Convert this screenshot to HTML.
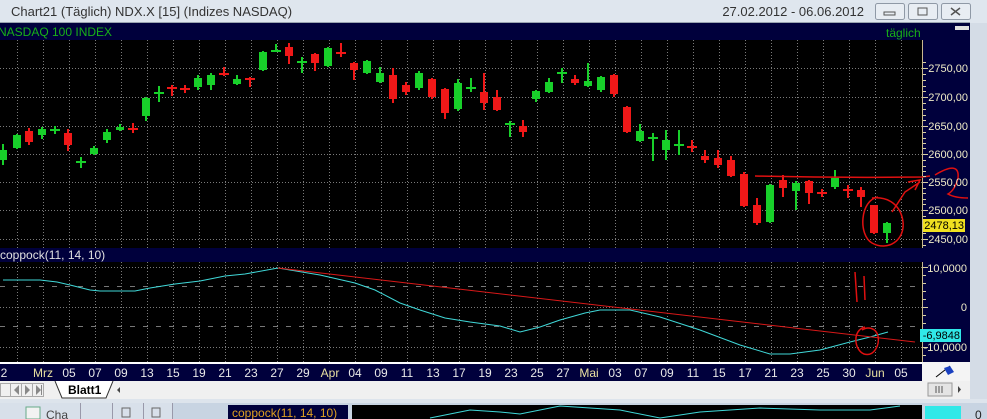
<!DOCTYPE html>
<html><head><meta charset="utf-8"><style>
html,body{margin:0;padding:0;width:987px;height:419px;overflow:hidden;background:#d6dee8;}
svg{display:block}
text{font-family:"Liberation Sans",sans-serif;}
</style></head><body>
<svg width="987" height="419" viewBox="0 0 987 419" xmlns="http://www.w3.org/2000/svg">
<rect x="0" y="0" width="987" height="23" fill="#dfe6ee"/>
<rect x="0" y="22" width="970" height="1" fill="#9aa4b0"/>
<text x="11" y="16" font-size="13" fill="#333">Chart21 (Täglich)  NDX.X [15] (Indizes NASDAQ)</text>
<text x="864" y="16" font-size="13" fill="#333" text-anchor="end">27.02.2012 - 06.06.2012</text>
<g fill="#e8edf3" stroke="#8f99a6">
<rect x="875.5" y="3.5" width="29" height="16" rx="2"/>
<rect x="908.5" y="3.5" width="29" height="16" rx="2"/>
<rect x="941.5" y="3.5" width="29" height="16" rx="2"/>
</g>
<rect x="884" y="12" width="11" height="3" fill="none" stroke="#555"/>
<rect x="918" y="8" width="9" height="7" fill="none" stroke="#555"/>
<path d="M951 8l9 7M960 8l-9 7" stroke="#555" stroke-width="1.5"/>
<rect x="970" y="23" width="17" height="380" fill="#d4dce6"/>
<rect x="0" y="23" width="970" height="17" fill="#00003c"/>
<text x="-2" y="36" font-size="12" fill="#18b018">NASDAQ 100 INDEX</text>
<text x="886" y="37" font-size="12" fill="#18b018">täglich</text>
<rect x="955" y="26" width="14" height="4" fill="#e0e0e0"/>
<rect x="0" y="40" width="922" height="208" fill="#000"/>
<rect x="922" y="40" width="48" height="208" fill="#00003c"/>
<rect x="922" y="40" width="1" height="208" fill="#c8b890"/>
<rect x="0" y="248" width="970" height="14" fill="#00003c"/>
<text x="0" y="259" font-size="12" fill="#e0e0e0">coppock(11, 14, 10)</text>
<rect x="0" y="262" width="922" height="100" fill="#000"/>
<rect x="922" y="262" width="48" height="100" fill="#00003c"/>
<rect x="922" y="262" width="1" height="100" fill="#c8b890"/>
<g stroke="#7a7a7a" stroke-width="1" stroke-dasharray="1,2">
<path d="M17.5 40V248M43.5 40V248M69.5 40V248M95.5 40V248M121.5 40V248M147.5 40V248M173.5 40V248M199.5 40V248M225.5 40V248M251.5 40V248M277.5 40V248M303.5 40V248M329.5 40V248M355.5 40V248M381.5 40V248M407.5 40V248M433.5 40V248M459.5 40V248M485.5 40V248M511.5 40V248M537.5 40V248M563.5 40V248M589.5 40V248M615.5 40V248M641.5 40V248M667.5 40V248M693.5 40V248M719.5 40V248M745.5 40V248M771.5 40V248M797.5 40V248M823.5 40V248M849.5 40V248M875.5 40V248M901.5 40V248"/>
<path d="M0 68.5H922M0 97.5H922M0 126.5H922M0 154.5H922M0 182.5H922M0 210.5H922M0 239.5H922"/>
<path d="M17.5 262V362M43.5 262V362M69.5 262V362M95.5 262V362M121.5 262V362M147.5 262V362M173.5 262V362M199.5 262V362M225.5 262V362M251.5 262V362M277.5 262V362M303.5 262V362M329.5 262V362M355.5 262V362M381.5 262V362M407.5 262V362M433.5 262V362M459.5 262V362M485.5 262V362M511.5 262V362M537.5 262V362M563.5 262V362M589.5 262V362M615.5 262V362M641.5 262V362M667.5 262V362M693.5 262V362M719.5 262V362M745.5 262V362M771.5 262V362M797.5 262V362M823.5 262V362M849.5 262V362M875.5 262V362M901.5 262V362"/>
<path d="M0 267.5H922M0 307.5H922M0 347.5H922"/>
</g>
<g stroke="#777" stroke-dasharray="5,8"><path d="M0 286.5H922M0 326.5H922"/></g>
<g fill="#18d02a" stroke="#18d02a">
<g stroke-width="2" fill="none"><path d="M3 144V165M17 134V149M42 127V139M55 126V134M81 157V168M94 146V155M107 129V143M120 124V131M146 97V121M159 86V102M198 75V90M211 73V90M237 75V85M263 51V71M276 44V52M302 57V73M328 47V67M367 60V74M380 67V83M419 71V90M458 79V111M471 78V92M510 121V137M536 90V102M549 78V93M562 68V83M588 63V87M601 76V92M640 124V142M653 133V161M666 130V160M679 130V155M770 184V223M796 181V210M835 170V189M887 222V243"/></g>
<g stroke="none">
<rect x="-1" y="150" width="8" height="10"/><rect x="13" y="135" width="8" height="13"/><rect x="38" y="129" width="8" height="6"/><rect x="50" y="129" width="10" height="2"/><rect x="76" y="161" width="10" height="2"/><rect x="90" y="148" width="8" height="6"/><rect x="103" y="132" width="8" height="8"/><rect x="116" y="127" width="8" height="3"/><rect x="142" y="98" width="8" height="18"/><rect x="154" y="92" width="10" height="2"/><rect x="194" y="78" width="8" height="9"/><rect x="207" y="75" width="8" height="10"/><rect x="233" y="79" width="8" height="5"/><rect x="259" y="52" width="8" height="18"/><rect x="271" y="50" width="10" height="2"/><rect x="297" y="61" width="10" height="2"/><rect x="324" y="48" width="8" height="18"/><rect x="363" y="61" width="8" height="12"/><rect x="376" y="73" width="8" height="9"/><rect x="415" y="73" width="8" height="15"/><rect x="454" y="83" width="8" height="26"/><rect x="466" y="87" width="10" height="2"/><rect x="505" y="123" width="10" height="2"/><rect x="532" y="91" width="8" height="8"/><rect x="545" y="82" width="8" height="10"/><rect x="557" y="72" width="10" height="2"/><rect x="584" y="81" width="8" height="5"/><rect x="597" y="77" width="8" height="13"/><rect x="636" y="131" width="8" height="10"/><rect x="648" y="137" width="10" height="2"/><rect x="662" y="140" width="8" height="10"/><rect x="674" y="144" width="10" height="2"/><rect x="766" y="185" width="8" height="37"/><rect x="792" y="183" width="8" height="8"/><rect x="831" y="178" width="8" height="9"/><rect x="883" y="223" width="8" height="10"/>
</g></g>
<g fill="#f01818">
<g stroke="#f01818" stroke-width="2" fill="none"><path d="M29 128V145M68 129V151M133 123V133M172 85V96M185 85V93M224 67V76M250 77V87M289 43V64M315 53V71M341 43V57M354 62V80M393 68V103M406 82V95M432 78V99M445 88V119M484 73V110M497 90V111M523 120V137M575 75V85M614 74V97M627 106V133M692 140V152M705 150V163M718 150V168M731 156V177M744 172V207M757 198V225M783 175V197M809 180V204M822 189V197M848 185V198M861 187V207M874 205V234"/></g>
<rect x="25" y="131" width="8" height="11"/><rect x="64" y="133" width="8" height="12"/><rect x="128" y="128" width="10" height="2"/><rect x="167" y="87" width="10" height="2"/><rect x="180" y="88" width="10" height="2"/><rect x="219" y="73" width="10" height="2"/><rect x="245" y="78" width="10" height="2"/><rect x="285" y="47" width="8" height="9"/><rect x="311" y="54" width="8" height="9"/><rect x="336" y="52" width="10" height="2"/><rect x="350" y="63" width="8" height="7"/><rect x="389" y="75" width="8" height="24"/><rect x="402" y="85" width="8" height="7"/><rect x="428" y="79" width="8" height="18"/><rect x="441" y="89" width="8" height="24"/><rect x="480" y="92" width="8" height="11"/><rect x="493" y="97" width="8" height="13"/><rect x="519" y="126" width="8" height="6"/><rect x="571" y="79" width="8" height="4"/><rect x="610" y="75" width="8" height="19"/><rect x="623" y="107" width="8" height="25"/><rect x="687" y="146" width="10" height="2"/><rect x="701" y="156" width="8" height="4"/><rect x="714" y="158" width="8" height="7"/><rect x="727" y="160" width="8" height="16"/><rect x="740" y="174" width="8" height="32"/><rect x="753" y="205" width="8" height="18"/><rect x="779" y="180" width="8" height="8"/><rect x="805" y="181" width="8" height="12"/><rect x="817" y="192" width="10" height="2"/><rect x="843" y="189" width="10" height="2"/><rect x="857" y="190" width="8" height="7"/><rect x="870" y="205" width="8" height="28"/>
</g>
<g fill="none" stroke="#e01010" stroke-width="1.5">
<path d="M755 176 Q840 178 922 177 L930 176"/>
<path d="M878 197 C860 200 858 235 872 243 C888 252 905 240 903 222 C901 205 888 196 872 198"/>
<path d="M892 212 L905 192 L920 182 M908 182 L920 180 L915 190"/>
<path d="M935 175 Q960 160 958 178 Q955 190 948 194 Q955 198 968 198"/>
</g>
<g stroke="#d8d0a0"><path d="M923 62.5h3M923 68.5h5M923 74.5h3M923 80.5h3M923 86.5h3M923 91.5h3M923 97.5h5M923 103.5h3M923 109.5h3M923 115.5h3M923 120.5h3M923 126.5h5M923 132.5h3M923 138.5h3M923 143.5h3M923 148.5h3M923 154.5h5M923 160.5h3M923 166.5h3M923 171.5h3M923 176.5h3M923 182.5h5M923 188.5h3M923 193.5h3M923 199.5h3M923 204.5h3M923 210.5h5M923 216.5h3M923 222.5h3M923 228.5h3M923 233.5h3M923 239.5h5M923 245.5h3"/></g>
<g font-size="11" fill="#f0ecc8" text-anchor="end">
<text x="968" y="72">2750,00</text><text x="968" y="101">2700,00</text><text x="968" y="130">2650,00</text><text x="968" y="158">2600,00</text><text x="968" y="186">2550,00</text><text x="968" y="214">2500,00</text><text x="968" y="243">2450,00</text>
</g>
<rect x="923" y="219" width="42" height="13" fill="#f0e020"/>
<text x="964" y="229" font-size="11" fill="#000" text-anchor="end">2478,13</text>
<polyline fill="none" stroke="#40d8d8" stroke-width="1" points="3,280 40,280 57,282 70,285 90,290 100,291 135,291 150,288 175,284 200,281 225,276 245,274 278,268 320,275 355,283 375,290 400,303 420,310 445,318 470,322 500,326 520,332 540,327 560,320 585,313 600,310 630,310 660,317 700,330 740,345 770,354 790,354 820,350 850,342 870,337 888,332"/>
<line x1="278" y1="268" x2="915" y2="342" stroke="#d81818" stroke-width="1"/>
<g fill="none" stroke="#e01010" stroke-width="1.5">
<path d="M855 272 L857 302 M864 276 L865 300"/>
<path d="M865 327 C852 330 854 350 864 354 C874 357 880 345 878 336 C876 328 868 326 862 330"/>
</g>
<g stroke="#d8d0a0"><path d="M923 267.5h5M923 275.5h3M923 283.5h3M923 291.5h3M923 299.5h3M923 307.5h5M923 315.5h3M923 323.5h3M923 331.5h3M923 339.5h3M923 347.5h5M923 355.5h3"/></g>
<g font-size="11" fill="#f0ecc8" text-anchor="end">
<text x="967" y="272">10,0000</text><text x="967" y="311">0</text><text x="967" y="351">-10,0000</text>
</g>
<rect x="920" y="329" width="41" height="13" fill="#30e8e8"/>
<text x="960" y="339" font-size="11" fill="#000" text-anchor="end">-6,9848</text>
<rect x="0" y="362" width="922" height="2" fill="#fff"/>
<rect x="0" y="364" width="922" height="17" fill="#00003c"/>
<rect x="922" y="362" width="48" height="19" fill="#f4f4f4"/>
<path d="M936 377 L950 366" stroke="#000" stroke-width="1"/>
<path d="M944 368 l6 -2 l4 6 l-6 3z" fill="#1a40c0"/>
<g font-size="12" fill="#e8e8e8" text-anchor="middle">
<text x="4" y="377">2</text><text x="43" y="377" fill="#e8e0a0">Mrz</text><text x="69" y="377">05</text><text x="95" y="377">07</text><text x="121" y="377">09</text><text x="147" y="377">13</text><text x="173" y="377">15</text><text x="199" y="377">19</text><text x="225" y="377">21</text><text x="251" y="377">23</text><text x="277" y="377">27</text><text x="303" y="377">29</text><text x="330" y="377" fill="#e8e0a0">Apr</text><text x="355" y="377">04</text><text x="381" y="377">09</text><text x="407" y="377">11</text><text x="433" y="377">13</text><text x="459" y="377">17</text><text x="485" y="377">19</text><text x="511" y="377">23</text><text x="537" y="377">25</text><text x="563" y="377">27</text><text x="589" y="377" fill="#e8e0a0">Mai</text><text x="615" y="377">03</text><text x="641" y="377">07</text><text x="667" y="377">09</text><text x="693" y="377">11</text><text x="719" y="377">15</text><text x="745" y="377">17</text><text x="771" y="377">21</text><text x="797" y="377">23</text><text x="823" y="377">25</text><text x="849" y="377">30</text><text x="875" y="377" fill="#e8e0a0">Jun</text><text x="901" y="377">05</text>
</g>
<rect x="0" y="381" width="970" height="18" fill="#f0f0f0"/>
<g fill="none" stroke="#aaa"><rect x="0.5" y="383.5" width="10" height="13"/><rect x="10.5" y="383.5" width="11" height="13"/><rect x="21.5" y="383.5" width="11" height="13"/><rect x="32.5" y="383.5" width="11" height="13"/></g>
<g fill="#888"><path d="M19 385v10l-5-5z"/><path d="M25 385v10l5-5z"/><path d="M36 385v10l5-5z"/><rect x="41" y="385" width="1" height="10"/></g>
<path d="M55 381 L62 398 L106 398 L113 381" fill="#fff" stroke="#333"/>
<text x="68" y="394" font-size="12" font-weight="bold" fill="#000">Blatt1</text>
<path d="M120 387 L117 390 L120 393z" fill="#444"/>
<rect x="928" y="383" width="24" height="13" fill="#e4e4e4" stroke="#999"/>
<path d="M936 386v7M939 386v7M942 386v7" stroke="#555"/>
<path d="M958 386 L961 389.5 L958 393z" fill="#444"/>
<rect x="0" y="399" width="987" height="4" fill="#dde4ec"/>
<rect x="0" y="403" width="987" height="16" fill="#c8d4e2"/>
<rect x="0" y="403" width="172" height="16" fill="#d8e0ea"/>
<rect x="26" y="407" width="14" height="12" fill="#f2f2f2" stroke="#6a8"/>
<text x="46" y="419" font-size="12" fill="#444">Cha</text>
<rect x="80" y="403" width="1" height="16" fill="#99a"/><rect x="112" y="403" width="1" height="16" fill="#99a"/><rect x="143" y="403" width="1" height="16" fill="#99a"/><rect x="172" y="403" width="1" height="16" fill="#99a"/>
<rect x="122" y="408" width="8" height="9" fill="none" stroke="#666"/>
<rect x="152" y="408" width="8" height="9" fill="none" stroke="#666"/>
<rect x="228" y="405" width="120" height="14" fill="#00003c"/>
<text x="232" y="417" font-size="12" fill="#e0a020">coppock(11, 14, 10)</text>
<rect x="352" y="405" width="570" height="14" fill="#000"/>
<polyline fill="none" stroke="#40d8d8" points="430,418 470,410 500,412 520,414 560,406 620,410 660,418 700,412 760,408 820,410 870,410 900,406"/>
<rect x="925" y="406" width="36" height="13" fill="#30e8e8"/>
<text x="975" y="419" font-size="12" fill="#222">0</text>
</svg>
</body></html>
